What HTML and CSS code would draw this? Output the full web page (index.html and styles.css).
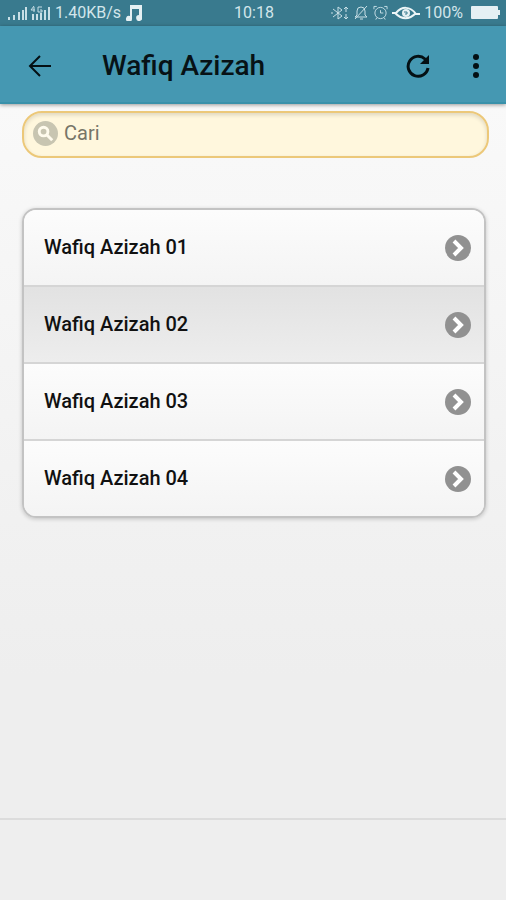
FILE: index.html
```html
<!DOCTYPE html>
<html lang="id">
<head>
<meta charset="utf-8">
<meta name="viewport" content="width=device-width, initial-scale=1">
<title>Wafiq Azizah</title>
<link rel="stylesheet" href="styles.css">
</head>
<body>
<div class="status">
  <div class="status-side">
    <svg width="43" height="16" viewBox="0 0 43 16" aria-hidden="true">
      <path d="M1 12v3M6 10v5M11 7v8M15 5v10M18 2v13"/>
      <path d="M25 9v6M29 9v6M33 8v7M37 5v10M41 2v13"/>
      <path class="thin" d="M26 1l-3 4h4M26 2v5M34 2h-4v5h4V5h-2"/>
    </svg>
    <span>1.40KB/s</span>
    <svg width="17" height="16" viewBox="0 0 17 16" aria-hidden="true"><path class="fill" d="M5 0h12v12a3 3 0 1 1-3-2V4H7v10a3 3 0 1 1-2-3z"/></svg>
  </div>
  <span class="clock">10:18</span>
  <div class="status-side status-end">
    <svg width="19" height="16" viewBox="0 0 19 16" aria-hidden="true"><path d="M3 4l9 7-4 3V2l4 3-9 7M1 8h2M16 2v5M14 4l2-2 2 2M16 9v5M14 12l2 2 2-2"/></svg>
    <svg width="16" height="16" viewBox="0 0 16 16" aria-hidden="true"><path d="M2 12h12l-2-2V6a4 4 0 0 0-8 0v4zM7 14h3M14 1L2 14"/></svg>
    <svg width="15" height="16" viewBox="0 0 16 16" aria-hidden="true"><circle cx="8" cy="8" r="6"/><path d="M8 5v3h3M1 4V1h3M15 4V1h-3M4 13l-1 2M12 13l1 2"/></svg>
    <svg class="eye" width="28" height="16" viewBox="0 0 28 16" aria-hidden="true"><path d="M0 8h4c6-7 14-7 20 1h4M3 8c7 7 14 7 21 0"/><circle class="fill" cx="14" cy="8" r="4"/><path class="pupil" d="M12 7h3v2h-2"/></svg>
    <span>100%</span>
    <svg class="battery" width="29" height="14" viewBox="0 0 29 14" aria-hidden="true"><rect class="fill" width="27" height="13" rx="1"/><path class="fill" d="M27 4h2v5h-2z"/></svg>
  </div>
</div>
<header class="bar">
  <button class="icon-button" type="button" aria-label="Kembali"><svg class="arrow" width="24" height="24" viewBox="0 0 24 24"><path d="M12 2L2 12l10 10M2 12h21"/></svg></button>
  <h1>Wafiq Azizah</h1>
  <button class="icon-button" type="button" aria-label="Muat ulang"><svg width="24" height="24" viewBox="0 0 24 24"><path d="M22 14A10 10 0 1 1 19 5l2 2"/><path class="solid" d="M23 1v9h-9z"/></svg></button>
  <button class="icon-button menu" type="button" aria-label="Menu"><svg width="8" height="24" viewBox="0 0 8 24"><g class="solid"><circle cx="4" cy="3" r="3"/><circle cx="4" cy="12" r="3"/><circle cx="4" cy="21" r="3"/></g></svg></button>
</header>
<main>
  <label class="search">
    <svg width="25" height="25" viewBox="0 0 26 26" aria-hidden="true"><circle class="disc" cx="13" cy="13" r="13"/><circle class="mark" cx="11" cy="11" r="4.500"/><path class="mark" d="M14 14l6 6"/></svg>
    <input type="search" placeholder="Cari" aria-label="Cari">
  </label>
  <ul class="list">
    <li><a href="#1"><span>Wafiq Azizah 01</span><svg width="26" height="26" viewBox="0 0 26 26" aria-hidden="true"><circle cx="13" cy="13" r="13"/><path d="M9 6l7 7-7 7"/></svg></a></li>
    <li><a class="active" href="#2"><span>Wafiq Azizah 02</span><svg width="26" height="26" viewBox="0 0 26 26" aria-hidden="true"><circle cx="13" cy="13" r="13"/><path d="M9 6l7 7-7 7"/></svg></a></li>
    <li><a href="#3"><span>Wafiq Azizah 03</span><svg width="26" height="26" viewBox="0 0 26 26" aria-hidden="true"><circle cx="13" cy="13" r="13"/><path d="M9 6l7 7-7 7"/></svg></a></li>
    <li><a href="#4"><span>Wafiq Azizah 04</span><svg width="26" height="26" viewBox="0 0 26 26" aria-hidden="true"><circle cx="13" cy="13" r="13"/><path d="M9 6l7 7-7 7"/></svg></a></li>
  </ul>
</main>
<footer></footer>
</body>
</html>
```
FILE: styles.css
```css
* { box-sizing: border-box; }
body {
  margin: 0;
  min-height: 100vh;
  display: flex;
  flex-direction: column;
  font-family: Roboto, "Liberation Sans", sans-serif;
  color: #111;
  background: #eee;
}
svg { display: block; flex: none; }
.status {
  display: grid;
  grid-template-columns: 1fr auto 1fr;
  align-items: center;
  height: 26px;
  padding: 0 6px 0 8px;
  background: #397a8e;
  color: #d3e6eb;
  font-size: 16px;
  line-height: 26px;
}
.status-side { display: flex; align-items: center; gap: 4px; }
.status-end { justify-content: flex-end; }
.status svg { fill: none; stroke: #c8dfe6; stroke-width: 2; }
.status-end svg { stroke-width: 1; }
.status .eye { stroke: #edf5f7; stroke-width: 2; }
.status .thin { stroke-width: 1; }
.status .fill { fill: #e5f0f3; stroke: none; }
.status .pupil { stroke: #397a8e; stroke-width: 1; }
.status .battery { margin-left: 4px; }
.bar {
  display: flex;
  align-items: center;
  height: 78px;
  padding: 3px 16px 0 14px;
  background: #4598b2;
  border-bottom: 2px solid #3991aa;
  box-shadow: 0 1px 4px #0006;
  position: relative;
}
.bar h1 {
  flex: 1;
  margin: 0 0 0 36px;
  color: #071216;
  font-size: 28px;
  line-height: 36px;
  font-weight: 500;
}
.icon-button {
  display: grid;
  place-items: center;
  width: 52px;
  height: 52px;
  padding: 0;
  border: 0;
  background: none;
}
.icon-button svg { fill: none; stroke: #041014; stroke-width: 3; }
.icon-button .arrow { stroke-width: 2; }
.icon-button .solid { fill: #041014; stroke: none; }
.menu { width: 48px; margin-left: 8px; margin-right: -10px; }
main {
  flex: 1;
  padding: 7px 20px 0 22px;
  background: linear-gradient(#f9f9f9, #eee 80%);
}
.search {
  display: flex;
  align-items: center;
  gap: 6px;
  height: 47px;
  margin-right: -3px;
  padding: 0 10px 2px 9px;
  border: 2px solid #ecc879;
  border-radius: 20px;
  background: #fff7dd;
  box-shadow: inset 0 2px 4px #0002;
}
.search .disc { fill: #c8c5b1; }
.search .mark { fill: none; stroke: #fffbed; stroke-width: 3; }
.search input {
  flex: 1;
  min-width: 0;
  padding: 0 0 2px;
  border: 0;
  outline: 0;
  background: none;
  font: 20px/26px Roboto, "Liberation Sans", sans-serif;
}
.search input::placeholder { color: #777568; opacity: 1; }
.list {
  margin: 50px 0 0;
  padding: 0;
  list-style: none;
  border: 2px solid #c3c3c3;
  border-radius: 14px;
  overflow: hidden;
  box-shadow: 0 1px 4px #0003;
}
.list li + li { border-top: 2px solid #d5d5d5; }
.list a {
  display: flex;
  align-items: center;
  justify-content: space-between;
  height: 75px;
  padding: 0 13px 0 20px;
  background: linear-gradient(#fcfcfc, #f4f4f4);
  color: #111;
  font-size: 20px;
  line-height: 26px;
  font-weight: 500;
  text-decoration: none;
}
.list span { padding-bottom: 2px; }
.list .active { background: linear-gradient(#e2e2e2, #ededed); }
.list circle { fill: #919191; }
.list path { fill: none; stroke: #fff; stroke-width: 4; }
footer {
  height: 82px;
  border-top: 2px solid #dcdcdc;
  background: #eee;
}
```
